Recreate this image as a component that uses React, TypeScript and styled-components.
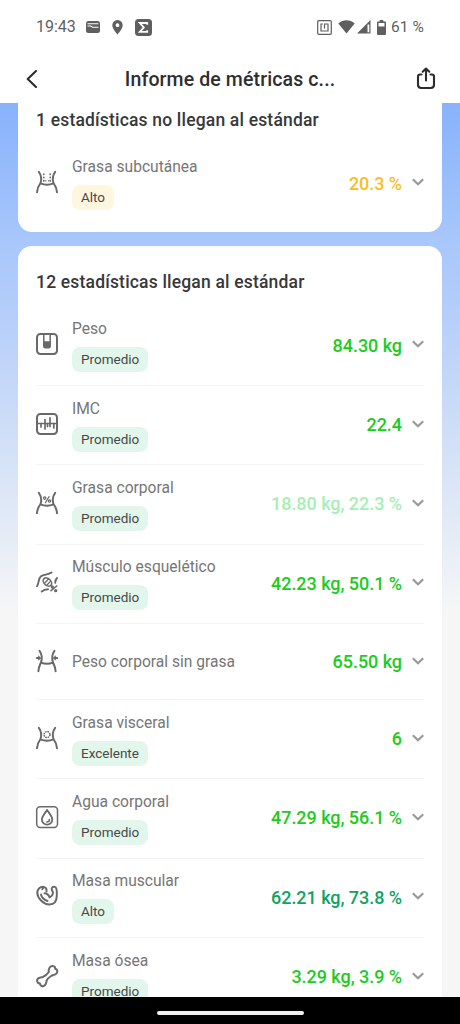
import React from 'react';
import styled, { createGlobalStyle } from 'styled-components';

const GlobalStyle = createGlobalStyle`
  *, *::before, *::after { box-sizing: border-box; }
  body { margin: 0; font-family: Roboto, sans-serif; background: #fff; }
`;

const Screen = styled.div`
  display: flex;
  flex-direction: column;
  width: 460px;
  height: 1024px;
  overflow: hidden;
  background: #fff;
`;

const StatusBar = styled.div`
  flex: none;
  display: flex;
  justify-content: space-between;
  align-items: center;
  height: 54px;
  padding: 0 36px;
  color: #5f5f5f;
  font-size: 16px;
  line-height: 20px;
`;

const StatusGroup = styled.div<{ $gap: number }>`
  display: flex;
  align-items: center;
  gap: ${(p) => p.$gap}px;
  svg { display: block; }
`;

const Clock = styled.span`
  margin-right: -2px;
`;

const Battery = styled.span`
  font-size: 15.5px;
  letter-spacing: 0.1px;
  margin-left: -1px;
`;

const SignalIcon = styled.svg`
  margin-left: -4px;
`;

const NavBar = styled.header`
  flex: none;
  display: flex;
  align-items: center;
  justify-content: space-between;
  height: 49px;
  padding: 0 24px 0 23px;
`;

const NavButton = styled.button`
  display: flex;
  padding: 0;
  border: 0;
  background: none;
  color: #2c2c2c;
`;

const Title = styled.h1`
  margin: 3px 0 0 3px;
  font-size: 19.5px;
  line-height: 24px;
  font-weight: 500;
  letter-spacing: 0.12px;
  color: #2e2e2e;
`;

const Content = styled.main`
  flex: 1;
  min-height: 0;
  display: flex;
  flex-direction: column;
  gap: 14px;
  padding: 0 18px;
  overflow: hidden;
  background: linear-gradient(180deg, #88b2fb 0, #a8c7fb 140px, #b5cefa 210px, #d5e2f7 355px, #f6f6f6 510px);
`;

const Card = styled.section<{ $continued?: boolean }>`
  flex: none;
  padding: ${(p) => (p.$continued ? '6px 18px 8px' : '25px 18px 20px')};
  border-radius: ${(p) => (p.$continued ? '0 0 14px 14px' : '14px')};
  background: #fff;
`;

const CardTitle = styled.h2`
  margin: 0 0 12.6px;
  font-size: 17.5px;
  line-height: 23px;
  font-weight: 500;
  letter-spacing: 0.18px;
  color: #383838;
`;

const Row = styled.div<{ $compact?: boolean }>`
  display: flex;
  align-items: center;
  height: ${(p) => (p.$compact ? 76 : 79.35)}px;
  padding-top: ${(p) => (p.$compact ? 2 : 0)}px;
  border-bottom: 1px solid #f4f4f4;
  &:last-child { border-bottom-color: transparent; }
`;

const IconBox = styled.div`
  flex: none;
  width: 22px;
  height: 24px;
  margin: -3px 14px 0 0;
  svg { display: block; overflow: visible; }
`;

const Labels = styled.div`
  flex: 1;
  display: flex;
  flex-direction: column;
  align-items: flex-start;
  gap: 8px;
`;

const Name = styled.span`
  font-size: 15.6px;
  line-height: 20px;
  color: #767676;
  white-space: nowrap;
`;

const Badge = styled.span<{ $tone: 'green' | 'amber' }>`
  height: 25px;
  padding: 0 8.6px 0 9px;
  border-radius: 8px;
  font-size: 13.5px;
  line-height: 25px;
  color: #484848;
  background: ${(p) => (p.$tone === 'green' ? '#e3f6ec' : '#fff6e0')};
`;

const Value = styled.span<{ $color: string }>`
  font-size: 18px;
  line-height: 22px;
  font-weight: 500;
  letter-spacing: -0.05px;
  white-space: nowrap;
  color: ${(p) => p.$color};
`;

const Chevron = styled.span`
  display: flex;
  margin: -3px 0 0 10px;
`;

const HomeBar = styled.footer`
  flex: none;
  display: flex;
  justify-content: center;
  height: 27px;
  padding-top: 13.5px;
  background: #000;
`;

const HomePill = styled.div`
  width: 147px;
  height: 4.5px;
  border-radius: 3px;
  background: #f0f0f0;
`;

type IconName =
  | 'subcutaneous' | 'weight' | 'bmi' | 'bodyFat' | 'skeletal'
  | 'lean' | 'visceral' | 'water' | 'muscle' | 'bone';

const torso = <path d="M2.8 1.8C5.3 5.5 5.9 9.4 4.5 13C2.3 16 1.2 19 1 22.3M19.2 1.8C16.7 5.5 16.1 9.4 17.5 13C19.7 16 20.8 19 21 22.3M4.5 13.4C8.5 15.1 13.5 15.1 17.5 13.4" />;

const drawings: Record<IconName, React.ReactNode> = {
  subcutaneous: (
    <>
      {torso}
      <path d="M7.8 4v7M14.2 4v7" strokeWidth="1.7" strokeDasharray=".3 3" />
      <path d="M9.5 10.8h3.5" strokeWidth="1.3" strokeDasharray=".3 2.6" />
    </>
  ),
  weight: (
    <>
      <rect x="1" y="2" width="20" height="20" rx="3.4" />
      <path d="M7.8 3v11.2q0 1.6 1.6 1.6h3.2q1.600 0 1.600-1.600V3" strokeWidth="1.5" />
      <path d="M7.500 9.200h7v4.800q0 2-2 2h-3q-2 0-2-2z" fill="currentColor" stroke="none" />
    </>
  ),
  bmi: (
    <>
      <rect x="1" y="2" width="20" height="20" rx="3.4" />
      <path d="M1.5 11.5h19" strokeWidth="1.7" />
      <path d="M5 11.5v3.500M9 7.500v9.500M14 5.800v8.700M17.800 11.500v4.500M11.500 11.500v3" strokeWidth="1.700" />
    </>
  ),
  bodyFat: (
    <>
      {torso}
      <path d="M9.4 11.7l3.7-6.2" strokeWidth="1.2" />
      <circle cx="8.7" cy="7" r="1.2" strokeWidth="1.2" />
      <circle cx="13.5" cy="10" r="1.2" strokeWidth="1.2" />
    </>
  ),
  skeletal: (
    <>
      <path d="M1 16.2C3.2 13.2 2 8.8 5 6.3C7.8 4.2 11.8 5 15.6 2.5M5.7 21.5C7.8 19.6 9.6 19.2 12 19.2M21 8C19.8 9.3 19.3 10.8 19.2 12.7" strokeWidth="1.9" />
      <ellipse cx="11.4" cy="12" rx="4.8" ry="3.4" transform="rotate(43 11.4 12)" strokeWidth="1.6" />
      <path d="M9 12.7l3.5-3.7M11.2 14.7l3.2-3.3" strokeWidth="1.3" />
      <path d="M15 20.7l5.8-4.7" strokeWidth="1.6" />
      <circle cx="16.3" cy="17" r=".9" strokeWidth="1.5" />
      <circle cx="19.7" cy="20.7" r=".9" strokeWidth="1.5" />
    </>
  ),
  lean: (
    <>
      <path d="M3.5 1.8C6 5.5 6.5 9.5 4.9 13.5C3.5 16.5 2.5 19.3 2.4 22.3M18.5 1.8C16 5.5 15.5 9.5 17.1 13.5C18.5 16.5 19.5 19.3 19.6 22.3M5 13.6C8.8 15 13.2 15 17 13.6" />
      <path d="M.8 9h2.500M21.2 9h-2.500" strokeWidth="2" />
      <path d="M2.2 6.2l3 2.800l-3 2.800zM19.800 6.200l-3 2.800l3 2.800z" fill="currentColor" stroke="none" />
    </>
  ),
  visceral: (
    <>
      {torso}
      <circle cx="11" cy="8.6" r="3" strokeWidth="1.5" strokeDasharray="1.6 .756" strokeLinecap="butt" />
    </>
  ),
  water: (
    <>
      <rect x=".7" y="1.7" width="20.8" height="20.8" rx="3.4" strokeWidth="1.5" />
      <path d="M11.1 4.9C9.5 7.7 5.9 11.4 5.9 14.5a5.2 5.2 0 0 0 10.4 0C16.3 11.4 12.7 7.7 11.1 4.9z" strokeWidth="1.8" />
      <path d="M10.8 17c1.5 0 2.6-1 2.7-2.6" strokeWidth="1.5" />
    </>
  ),
  muscle: (
    <path d="M10.500 7.500C10.900 5 9.800 3.200 7.800 2.900C4.300 2.300 1.200 4.900 1.300 8.700C1.500 14.500 7.500 20.500 13.500 20.500C18.500 20.500 20.700 16.500 20.800 11.800C20.800 8.500 21.400 3.700 18.900 2.900C16.700 2.300 15.200 3.900 15.800 5.700C16.400 7.300 17.300 7.700 16.900 9.500C16.500 11.300 15.500 12.500 13.700 13.500C12.600 11 11 9.500 8.500 9.300M7.800 3L6.300 5.200M5 10.500C5.700 13.700 8.200 15.900 11.500 17" />
  ),
  bone: (
    <path d="M12.8 8C12.2 4.6 14 1.9 16.7 2C18.5 2.1 19.3 3.5 19.2 4.8C21.2 5.3 21.9 7.3 20.9 9.1C19.9 10.9 17.5 11 15.8 11.5C13.6 12.9 11.5 14.7 10.6 16.7C10.4 18.9 9.8 21.3 7.6 22C5.6 22.6 4 21.3 4 19.6C2 19.5.6 17.6 1.2 15.7C2 13.7 4.5 13.6 6.600 13.200C9 12 11.300 10.300 12.800 8z" />
  ),
};

function MetricIcon({ name }: { name: IconName }) {
  return (
    <svg width="22" height="24" viewBox="0 0 22 24" color="#696969" fill="none" stroke="currentColor" strokeWidth="2" strokeLinecap="round" strokeLinejoin="round">
      {drawings[name]}
    </svg>
  );
}

interface Metric {
  icon: IconName;
  name: string;
  badge?: string;
  value: string;
  color: string;
  tone?: 'green' | 'amber';
}

const GREEN = '#20cb20';

const below: Metric[] = [
  { icon: 'subcutaneous', name: 'Grasa subcutánea', badge: 'Alto', value: '20.3 %', color: '#fbbd26', tone: 'amber' },
];

const standard: Metric[] = [
  { icon: 'weight', name: 'Peso', badge: 'Promedio', value: '84.30 kg', color: GREEN },
  { icon: 'bmi', name: 'IMC', badge: 'Promedio', value: '22.4', color: GREEN },
  { icon: 'bodyFat', name: 'Grasa corporal', badge: 'Promedio', value: '18.80 kg, 22.3 %', color: '#a6efb4' },
  { icon: 'skeletal', name: 'Músculo esquelético', badge: 'Promedio', value: '42.23 kg, 50.1 %', color: GREEN },
  { icon: 'lean', name: 'Peso corporal sin grasa', value: '65.50 kg', color: GREEN },
  { icon: 'visceral', name: 'Grasa visceral', badge: 'Excelente', value: '6', color: GREEN },
  { icon: 'water', name: 'Agua corporal', badge: 'Promedio', value: '47.29 kg, 56.1 %', color: GREEN },
  { icon: 'muscle', name: 'Masa muscular', badge: 'Alto', value: '62.21 kg, 73.8 %', color: '#0fa362' },
  { icon: 'bone', name: 'Masa ósea', badge: 'Promedio', value: '3.29 kg, 3.9 %', color: GREEN },
];

function MetricRow({ metric }: { metric: Metric }) {
  return (
    <Row $compact={!metric.badge}>
      <IconBox><MetricIcon name={metric.icon} /></IconBox>
      <Labels>
        <Name>{metric.name}</Name>
        {metric.badge && <Badge $tone={metric.tone ?? 'green'}>{metric.badge}</Badge>}
      </Labels>
      <Value $color={metric.color}>{metric.value}</Value>
      <Chevron>
        <svg width="12" height="8" viewBox="0 0 12 8" fill="none" stroke="#999" strokeWidth="2.2">
          <path d="M.8 1.2L6 6.2l5.2-5" />
        </svg>
      </Chevron>
    </Row>
  );
}

export default function App() {
  return (
    <Screen>
      <GlobalStyle />
      <StatusBar>
        <StatusGroup $gap={12}>
          <Clock>19:43</Clock>
          <svg width="14" height="12" viewBox="0 0 14 12">
            <rect width="14" height="12" rx="2.5" fill="#5f5f5f" />
            <path d="M1.5 2.8h11M1.5 5h3.2l2 1.2h5.8" fill="none" stroke="#fff" strokeWidth="1.1" />
          </svg>
          <svg width="11" height="15" viewBox="0 0 11 15">
            <path d="M5.5 0A5.2 5.2 0 0 0 .3 5.2C.3 8.8 5.5 14.5 5.5 14.5S10.7 8.8 10.7 5.2A5.2 5.2 0 0 0 5.5 0zM5.5 3.3a1.9 1.9 0 1 1 0 3.8a1.9 1.9 0 0 1 0-3.8z" fill="#5f5f5f" fillRule="evenodd" />
          </svg>
          <svg width="17" height="17" viewBox="0 0 17 17">
            <rect width="17" height="17" rx="3.5" fill="#5f5f5f" />
            <path d="M12.2 5.7V4H4.8l4 4.5l-4 4.4h7.4v-1.7" fill="none" stroke="#fff" strokeWidth="1.8" />
          </svg>
        </StatusGroup>
        <StatusGroup $gap={6}>
          <svg width="15" height="15" viewBox="0 0 15 15" fill="none" stroke="#5f5f5f">
            <rect x=".7" y=".7" width="13.6" height="13.6" rx="1" strokeWidth="1.2" />
            <path d="M5.8 4H4v7h7V4H7.5v4.5" strokeWidth="1.2" />
          </svg>
          <svg width="17" height="14" viewBox="0 0 17 14">
            <path d="M8.5 13.5L.3 3.6C5-.8 12-.8 16.7 3.6z" fill="#5f5f5f" />
          </svg>
          <SignalIcon width="14" height="14" viewBox="0 0 14 14">
            <path d="M0 13.5L13.5 0v13.500z" fill="#5f5f5f" />
            <path d="M10.5 4.5h1.800v7.800h-1.800z" fill="#fff" />
          </SignalIcon>
          <svg width="9" height="15" viewBox="0 0 9 15">
            <path d="M2.7 0h3.600v1.500H8q1 0 1 1V14q0 1-1 1H1q-1 0-1-1V2.500q0-1 1-1h1.700z" fill="#5f5f5f" />
            <path d="M1.5 3h6v3.500h-6z" fill="#fff" />
          </svg>
          <Battery>61 %</Battery>
        </StatusGroup>
      </StatusBar>
      <NavBar>
        <NavButton aria-label="Atrás">
          <svg width="18" height="20" viewBox="0 0 18 20" fill="none" stroke="currentColor" strokeWidth="2.1" strokeLinecap="round" strokeLinejoin="round">
            <path d="M13 2L4.7 10l8.300 8" />
          </svg>
        </NavButton>
        <Title>Informe de métricas c...</Title>
        <NavButton aria-label="Compartir">
          <svg width="20" height="24" viewBox="0 0 20 24" fill="none" stroke="currentColor" strokeWidth="2.1" strokeLinecap="round" strokeLinejoin="round">
            <path d="M5.5 7.5H4.200Q2 7.500 2 9.700v8.100Q2 21 5.200 21h9.600Q18 21 18 17.800V9.700Q18 7.500 15.800 7.500h-1.300M10 13.500V1.700M6.700 4.700L10 1.500l3.300 3.200" />
          </svg>
        </NavButton>
      </NavBar>
      <Content>
        <Card $continued>
          <CardTitle>1 estadísticas no llegan al estándar</CardTitle>
          {below.map((m) => <MetricRow key={m.name} metric={m} />)}
        </Card>
        <Card>
          <CardTitle>12 estadísticas llegan al estándar</CardTitle>
          {standard.map((m) => <MetricRow key={m.name} metric={m} />)}
        </Card>
      </Content>
      <HomeBar><HomePill /></HomeBar>
    </Screen>
  );
}
